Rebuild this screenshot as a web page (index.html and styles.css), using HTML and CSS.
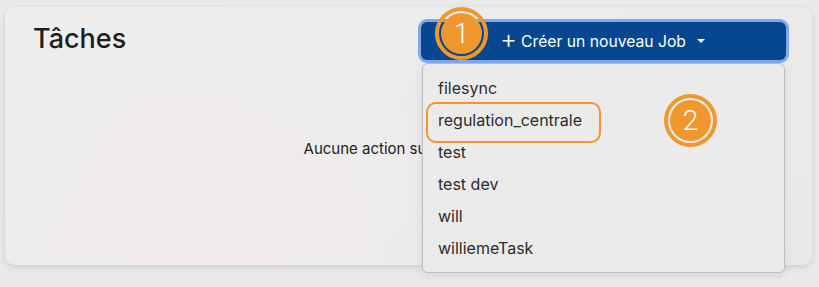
FILE: index.html
```html
<!DOCTYPE html>
<html lang="fr">
<head>
    <meta charset="UTF-8">
    <meta name="viewport" content="width=device-width, initial-scale=1.0">
    <title>Tâches</title>
    <link rel="stylesheet" href="styles.css">
</head>
<body>
    <div class="card">
        <div class="card-header">
            <h1>Tâches</h1>
            <div class="job-menu">
                <button class="job-button" type="button">
                    <span class="plus">+</span> Créer un nouveau Job <span class="caret"></span>
                </button>
                <ul class="job-list">
                    <li class="job-item">filesync</li>
                    <li class="job-item marked">regulation_centrale</li>
                    <li class="job-item">test</li>
                    <li class="job-item">test dev</li>
                    <li class="job-item">will</li>
                    <li class="job-item">williemeTask</li>
                </ul>
                <span class="step step-one">1</span>
                <span class="step step-two">2</span>
            </div>
        </div>
        <p class="empty">Aucune action sur cette tâche</p>
    </div>
</body>
</html>
```

FILE: styles.css
```css
* {
    box-sizing: border-box;
    margin: 0;
    padding: 0;
}

html,
body {
    height: 100%;
}

body {
    font-family: Inter, "Noto Sans", sans-serif;
    color: #222;
    background-color: #e9e9e9;
    padding: 7px 7px 0 5px;
}

.card {
    height: 258px;
    border-radius: 10px;
    background: radial-gradient(circle at 25% 95%, #f2ebee 0%, rgba(242, 235, 238, 0) 45%),
                linear-gradient(160deg, #eeeeee 0%, #eaeaea 60%, #e9e9e9 100%);
    box-shadow: 0 2px 6px rgba(0, 0, 0, 0.12);
    padding: 15px 26px 0 28px;
}

.card-header {
    display: flex;
    justify-content: space-between;
    align-items: flex-start;
}

h1 {
    font-size: 27px;
    font-weight: 500;
    color: #1e1e1e;
    line-height: 1.2;
    margin-top: 1px;
}

.job-menu {
    position: relative;
    width: 365px;
}

.job-button {
    display: flex;
    align-items: center;
    justify-content: center;
    width: 100%;
    height: 38px;
    border: none;
    border-radius: 6px;
    background-color: #05478f;
    color: #fff;
    font-family: Inter, "Noto Sans", sans-serif;
    font-size: 15.7px;
    box-shadow: 0 0 0 3px #80a9ea;
    padding-right: 2px;
    cursor: pointer;
}

.plus {
    font-size: 26px;
    font-weight: 300;
    margin-right: 4px;
    line-height: 1;
    position: relative;
    top: -2px;
}

.caret {
    width: 0;
    height: 0;
    border-left: 4px solid transparent;
    border-right: 4px solid transparent;
    border-top: 4px solid #fff;
    margin-left: 11px;
}

.job-list {
    list-style: none;
    position: absolute;
    top: 41px;
    left: 1px;
    width: 363px;
    padding: 8px 0;
    border: 1px solid #bdbdbd;
    border-radius: 6px;
    background-color: #ebebeb;
    box-shadow: 0 3px 8px rgba(0, 0, 0, 0.08);
    z-index: 1;
}

.job-item {
    position: relative;
    height: 32px;
    line-height: 32px;
    padding-left: 15px;
    font-size: 16px;
    color: #2c2c2c;
}

.job-item.marked::after {
    content: "";
    position: absolute;
    left: 3px;
    top: -2px;
    width: 171px;
    height: 37px;
    border: 2px solid #f0962e;
    border-radius: 10px;
}

.step {
    position: absolute;
    z-index: 2;
    display: flex;
    align-items: center;
    justify-content: center;
    width: 53px;
    height: 53px;
    border-radius: 50%;
    border: 4px solid #f0972f;
    padding: 2px;
    background-color: #f0972f;
    background-clip: content-box;
    color: #fff;
    font-family: Roboto, sans-serif;
    font-size: 28px;
    font-weight: 300;
}

.step-one {
    left: 14px;
    top: -15px;
}

.step-two {
    left: 243px;
    top: 72px;
}

.empty {
    text-align: center;
    font-size: 15px;
    color: #222;
    margin-top: 79px;
}
```
